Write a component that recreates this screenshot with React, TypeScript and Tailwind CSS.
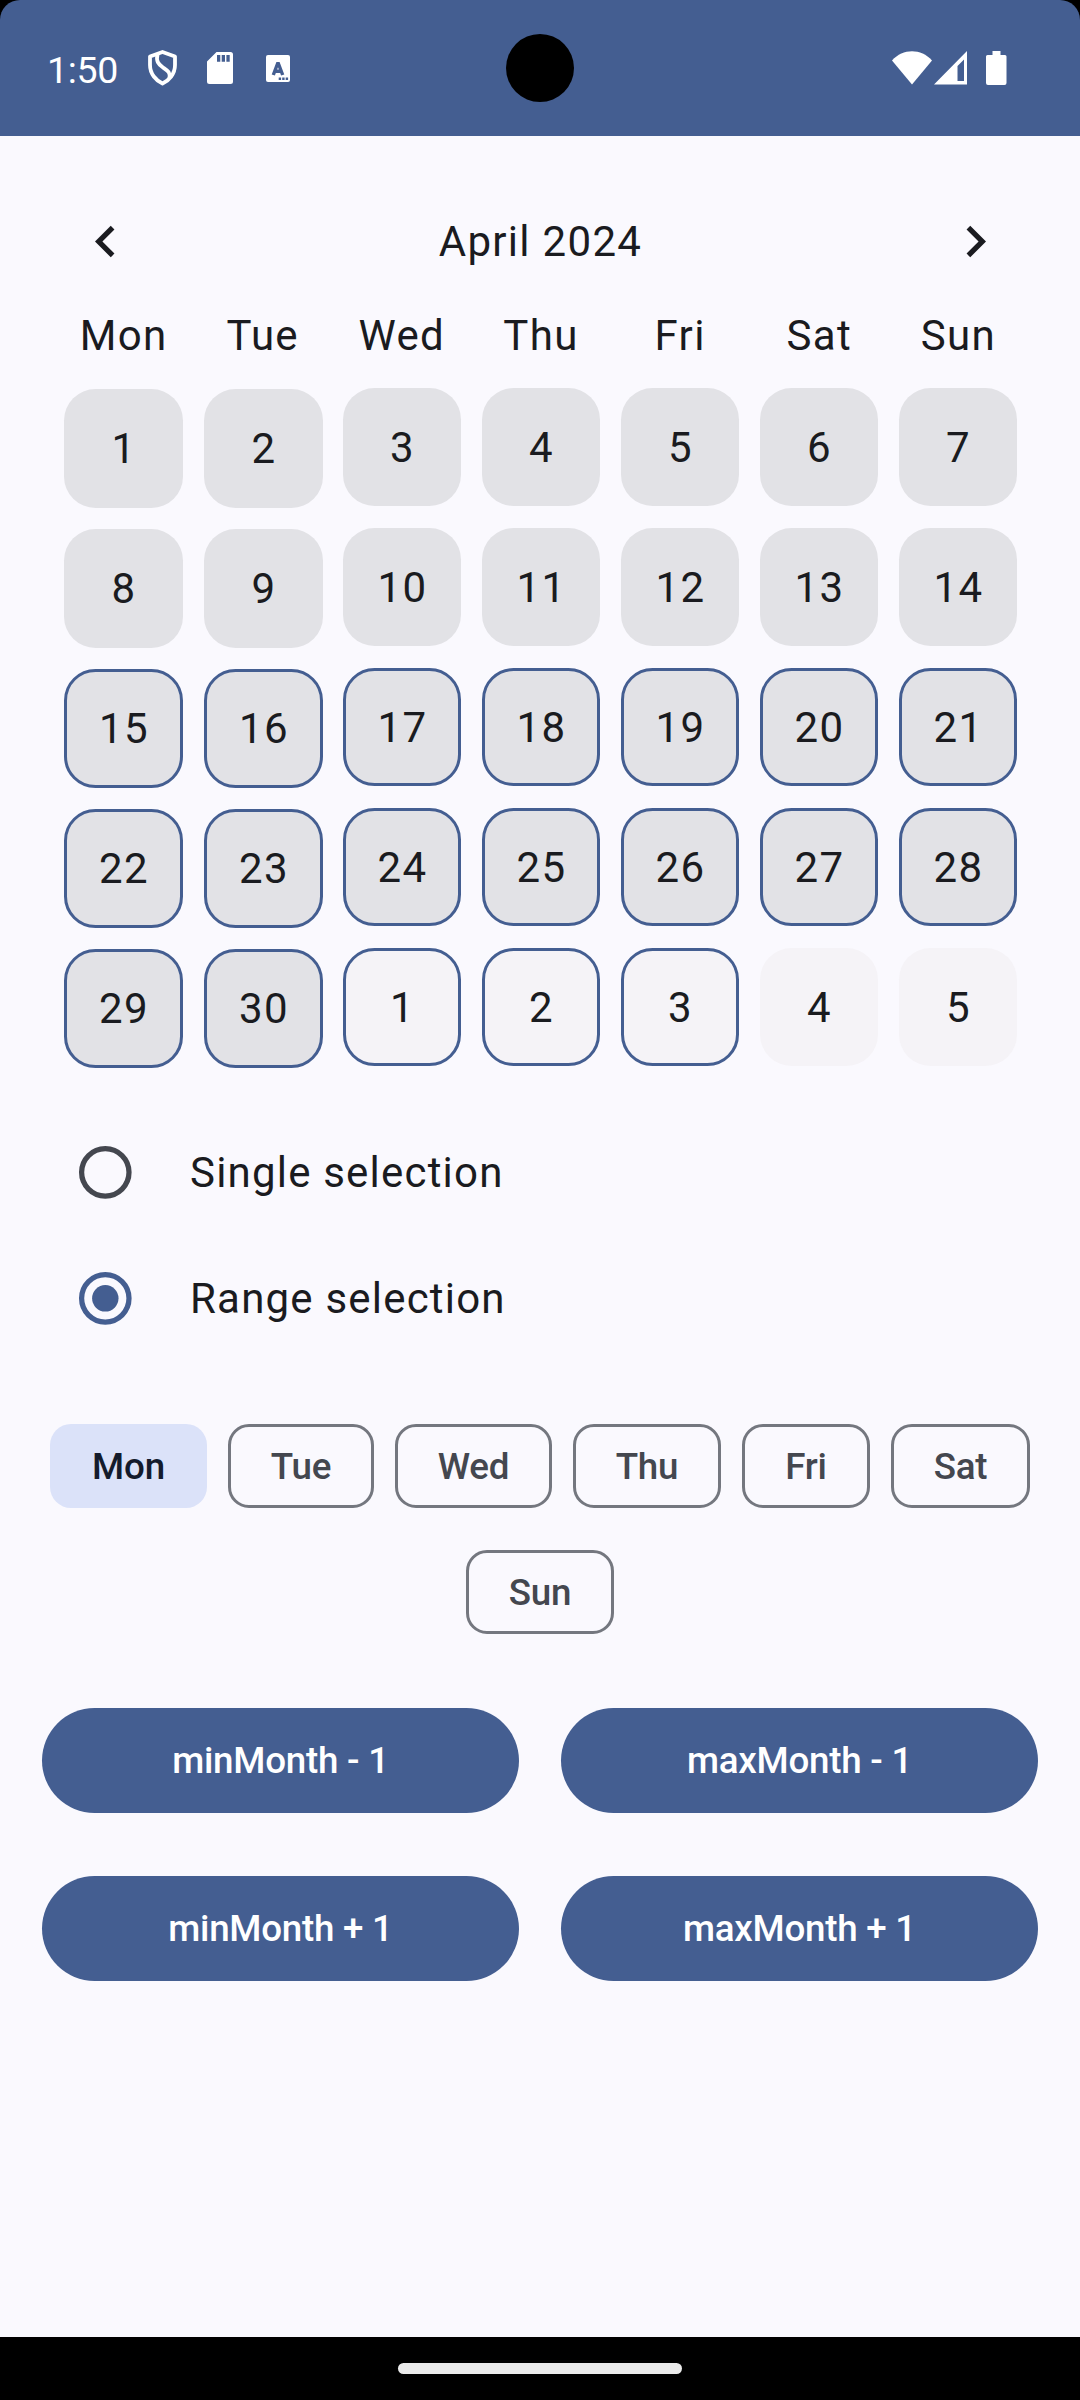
import type { ReactNode } from "react";

type Day = { day: number; selected: boolean; outside: boolean };

const WEEKDAYS = ["Mon", "Tue", "Wed", "Thu", "Fri", "Sat", "Sun"];

const DAYS: Day[] = Array.from({ length: 35 }, (_, i) => ({
  day: i < 30 ? i + 1 : i - 29,
  selected: i >= 14 && i <= 32,
  outside: i >= 30,
}));

const CHIPS = [
  { label: "Mon", width: "w-[157px]" },
  { label: "Tue", width: "w-[146px]" },
  { label: "Wed", width: "w-[157px]" },
  { label: "Thu", width: "w-[148px]" },
  { label: "Fri", width: "w-[128px]" },
  { label: "Sat", width: "w-[139px]" },
  { label: "Sun", width: "w-[148px]" },
];

function StatusBar() {
  return (
    <div className="bg-black">
      <header className="relative flex h-[136px] items-center justify-between rounded-t-[20px] bg-[#445e91] pl-[47px] pr-[73px] text-white">
        <div className="flex items-center">
          <span className="w-[100px] pt-[3px] text-[37.5px] leading-[44px] tracking-[-0.3px]">1:50</span>
          <svg className="h-[36px] w-[31px]" viewBox="0 0 31 36" fill="none" stroke="currentColor" strokeWidth="3.8" strokeLinejoin="round">
            <path d="M15.5 2 L28 6.5 V15 C28 24 22 30.500 15.500 33.500 C9 30.500 3 24 3 15 V6.500 Z" />
            <path d="M10.500 4.500 C9 11 11 14 16 17.500 C21 21 23.500 22.500 22.500 28" />
          </svg>
          <svg className="ml-[29px] h-[32px] w-[26px]" viewBox="0 0 26 32">
            <path fill="currentColor" fillRule="evenodd" d="M9.500 0 H23.500 Q26 0 26 2.500 V29.500 Q26 32 23.500 32 H2.500 Q0 32 0 29.500 V9.500 Z M10 3 V9.700 H13.300 V3 Z M14.700 3 V9.700 H18 V3 Z M19.400 3 V9.700 H22.700 V3 Z" />
          </svg>
          <svg className="ml-[33px] h-[27px] w-[24px]" viewBox="0 0 24 27">
            <rect width="24" height="27" rx="2" fill="currentColor" />
            <path d="M7.300 20 L12 7.500 L16.700 20 M9 16.200 H15" stroke="#445e91" strokeWidth="3.400" fill="none" strokeLinejoin="bevel" />
            <path d="M12.700 22.600 h2.400 v2.400 h-2.400z M16.200 22.600 h2.400 v2.400 h-2.400z M19.700 22.600 h2.400 v2.400 h-2.400z" fill="#445e91" />
          </svg>
        </div>
        <div className="absolute left-[506px] top-[34px] size-[68px] rounded-full bg-black" />
        <div className="flex items-center">
          <svg className="h-[34px] w-[40px]" viewBox="0 0 40 34" fill="currentColor">
            <path d="M0 9.500 C11 -2.800 29 -2.800 40 9.500 L20 33.500 Z" />
          </svg>
          <svg className="ml-[2px] h-[34px] w-[33px]" viewBox="0 0 33 34" fill="currentColor">
            <path fillRule="evenodd" d="M33 0 V33.500 H0 Z M30 8.500 L23.500 15 V30 H30 Z" />
          </svg>
          <svg className="ml-[19px] h-[34px] w-[21px]" viewBox="0 0 21 34" fill="currentColor">
            <path d="M6.500 0 H14.500 V4 H19 Q20.500 4 20.500 5.500 V32 Q20.500 34 18.500 34 H2 Q0 34 0 32 V5.500 Q0 4 1.500 4 H6.500 Z" />
          </svg>
        </div>
      </header>
    </div>
  );
}

function ArrowButton({ label, path }: { label: string; path: string }) {
  return (
    <button aria-label={label} className="flex size-[126px] items-center justify-center">
      <svg className="size-[63px]" viewBox="0 0 24 24" fill="currentColor">
        <path d={path} />
      </svg>
    </button>
  );
}

function DayCell({ item, index }: { item: Day; index: number }) {
  // The leading two columns take the spare pixels left over by the division.
  const wide = index % 7 < 2;
  return (
    <div className={`h-[140px] ${wide ? "pl-[10px] pt-[11px]" : "pl-[9px] pt-[10px]"}`}>
      <div
        className={`flex items-center justify-center rounded-[31.5px] pl-px ${wide ? "size-[119px]" : "size-[118px]"} ${
          item.outside ? "bg-[#f5f3f7]" : "bg-[#e2e2e6]"
        } ${item.selected ? "border-3 border-[#445e91]" : ""}`}
      >
        {item.day}
      </div>
    </div>
  );
}

function Radio({ checked, children }: { checked: boolean; children: ReactNode }) {
  return (
    <div role="radio" aria-checked={checked} className="flex h-[126px] items-center px-[42px]">
      <svg className="mr-[22px] size-[126px]" viewBox="0 0 126 126" fill="none">
        <circle cx="63.300" cy="63.300" r="23.700" strokeWidth="5.250" className={checked ? "stroke-[#445e91]" : "stroke-[#44474f]"} />
        {checked && <circle cx="63.300" cy="63.300" r="13.200" className="fill-[#445e91]" />}
      </svg>
      <span className="tracking-[1.2px]">{children}</span>
    </div>
  );
}

function FilledButton({ children }: { children: ReactNode }) {
  return (
    <button className="h-[105px] rounded-full bg-[#445e91] text-[36.75px] font-medium tracking-[-0.25px] text-white">
      {children}
    </button>
  );
}

export default function App() {
  return (
    <div className="flex h-[2400px] w-[1080px] flex-col overflow-hidden bg-[#faf9fe] font-[Roboto,sans-serif] text-[42px] leading-[63px] tracking-[1.3125px] text-[#1a1b20]">
      <div className="tracking-normal">
        <StatusBar />
      </div>
      <main className="grow pt-[42px]">
        <div className="flex h-[126px] items-center justify-between pl-[42px] pr-[41px]">
          <ArrowButton label="Previous month" path="M15.41 16.59 10.83 12l4.58-4.59L14 6l-6 6 6 6z" />
          <span>April 2024</span>
          <ArrowButton label="Next month" path="M8.59 16.59 13.17 12 8.59 7.41 10 6l6 6-6 6z" />
        </div>
        <div className="ml-[54px] grid h-[62px] w-[974px] grid-cols-7 items-center text-center">
          {WEEKDAYS.map((d) => (
            <span key={d}>{d}</span>
          ))}
        </div>
        <div className="ml-[54px] mt-[12px] grid grid-cols-[140px_140px_repeat(5,139px)]">
          {DAYS.map((item, i) => (
            <DayCell key={i} item={item} index={i} />
          ))}
        </div>
        <div className="mt-[31px]" role="radiogroup">
          <Radio checked={false}>Single selection</Radio>
          <Radio checked>Range selection</Radio>
        </div>
        <div className="mt-[63px] flex flex-wrap justify-center gap-x-[21px] gap-y-[42px] px-[42px] text-[36.75px] font-medium tracking-[-0.2px]">
          {CHIPS.map((chip, i) => (
            <button
              key={chip.label}
              className={`h-[84px] rounded-[21px] ${chip.width} ${
                i === 0 ? "bg-[#dbe2f9] text-[#141b2c]" : "border-3 border-[#74777f] text-[#44474f]"
              }`}
            >
              {chip.label}
            </button>
          ))}
        </div>
        <div className="mt-[74px] grid grid-cols-2 gap-x-[42px] gap-y-[63px] px-[42px]">
          <FilledButton>minMonth - 1</FilledButton>
          <FilledButton>maxMonth - 1</FilledButton>
          <FilledButton>minMonth + 1</FilledButton>
          <FilledButton>maxMonth + 1</FilledButton>
        </div>
      </main>
      <footer className="flex h-[63px] justify-center bg-black pt-[26px]">
        <div className="h-[11px] w-[284px] rounded-full bg-[#ebebeb]" />
      </footer>
    </div>
  );
}
